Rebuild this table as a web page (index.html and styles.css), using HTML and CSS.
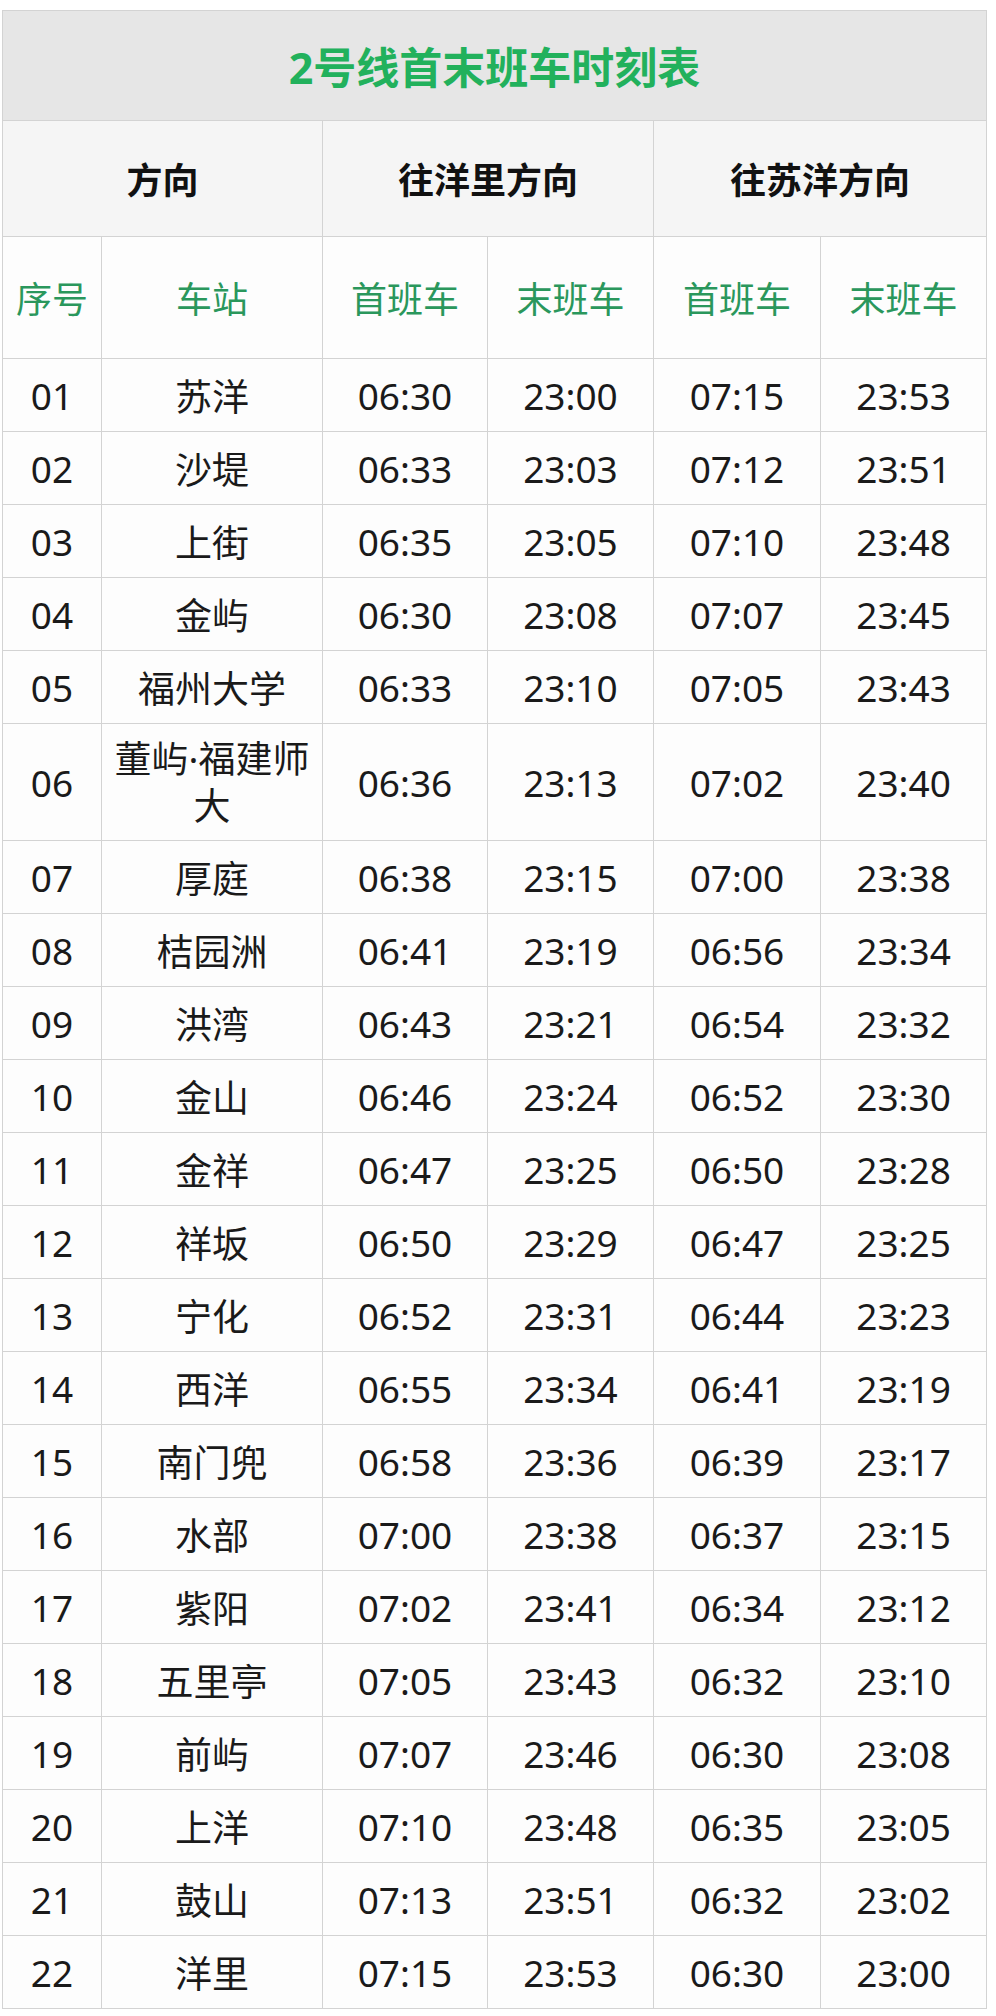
FILE: index.html
```html
<!DOCTYPE html>
<html lang="zh-CN">
<head>
<meta charset="utf-8">
<title>2号线首末班车时刻表</title>
<link rel="stylesheet" href="styles.css">
</head>
<body>
<div class="page">
<table class="timetable">
  <colgroup>
    <col class="c-no"><col class="c-st"><col class="c-t1"><col class="c-t2"><col class="c-t3"><col class="c-t4">
  </colgroup>
  <thead>
    <tr class="row-title"><th colspan="6">2号线首末班车时刻表</th></tr>
    <tr class="row-dir"><th colspan="2">方向</th><th colspan="2">往洋里方向</th><th colspan="2">往苏洋方向</th></tr>
    <tr class="row-sub"><th>序号</th><th>车站</th><th>首班车</th><th>末班车</th><th>首班车</th><th>末班车</th></tr>
  </thead>
  <tbody>
    <tr><td>01</td><td>苏洋</td><td>06:30</td><td>23:00</td><td>07:15</td><td>23:53</td></tr>
    <tr><td>02</td><td>沙堤</td><td>06:33</td><td>23:03</td><td>07:12</td><td>23:51</td></tr>
    <tr><td>03</td><td>上街</td><td>06:35</td><td>23:05</td><td>07:10</td><td>23:48</td></tr>
    <tr><td>04</td><td>金屿</td><td>06:30</td><td>23:08</td><td>07:07</td><td>23:45</td></tr>
    <tr><td>05</td><td>福州大学</td><td>06:33</td><td>23:10</td><td>07:05</td><td>23:43</td></tr>
    <tr class="tall"><td>06</td><td class="wrap">董屿·福建师<br>大</td><td>06:36</td><td>23:13</td><td>07:02</td><td>23:40</td></tr>
    <tr><td>07</td><td>厚庭</td><td>06:38</td><td>23:15</td><td>07:00</td><td>23:38</td></tr>
    <tr><td>08</td><td>桔园洲</td><td>06:41</td><td>23:19</td><td>06:56</td><td>23:34</td></tr>
    <tr><td>09</td><td>洪湾</td><td>06:43</td><td>23:21</td><td>06:54</td><td>23:32</td></tr>
    <tr><td>10</td><td>金山</td><td>06:46</td><td>23:24</td><td>06:52</td><td>23:30</td></tr>
    <tr><td>11</td><td>金祥</td><td>06:47</td><td>23:25</td><td>06:50</td><td>23:28</td></tr>
    <tr><td>12</td><td>祥坂</td><td>06:50</td><td>23:29</td><td>06:47</td><td>23:25</td></tr>
    <tr><td>13</td><td>宁化</td><td>06:52</td><td>23:31</td><td>06:44</td><td>23:23</td></tr>
    <tr><td>14</td><td>西洋</td><td>06:55</td><td>23:34</td><td>06:41</td><td>23:19</td></tr>
    <tr><td>15</td><td>南门兜</td><td>06:58</td><td>23:36</td><td>06:39</td><td>23:17</td></tr>
    <tr><td>16</td><td>水部</td><td>07:00</td><td>23:38</td><td>06:37</td><td>23:15</td></tr>
    <tr><td>17</td><td>紫阳</td><td>07:02</td><td>23:41</td><td>06:34</td><td>23:12</td></tr>
    <tr><td>18</td><td>五里亭</td><td>07:05</td><td>23:43</td><td>06:32</td><td>23:10</td></tr>
    <tr><td>19</td><td>前屿</td><td>07:07</td><td>23:46</td><td>06:30</td><td>23:08</td></tr>
    <tr><td>20</td><td>上洋</td><td>07:10</td><td>23:48</td><td>06:35</td><td>23:05</td></tr>
    <tr><td>21</td><td>鼓山</td><td>07:13</td><td>23:51</td><td>06:32</td><td>23:02</td></tr>
    <tr><td>22</td><td>洋里</td><td>07:15</td><td>23:53</td><td>06:30</td><td>23:00</td></tr>
  </tbody>
</table>
</div>
</body>
</html>
```

FILE: styles.css
```css
html, body {
  margin: 0;
  padding: 0;
  background: #ffffff;
}

.page {
  padding: 10px 0 0 2px;
}

.timetable {
  border-collapse: collapse;
  table-layout: fixed;
  width: 985px;
  font-family: "Noto Sans", "Noto Sans CJK SC", sans-serif;
  color: #1a1a1a;
}

.c-no { width: 99px; }
.c-st { width: 221px; }
.c-t1 { width: 165px; }
.c-t2 { width: 166px; }
.c-t3 { width: 167px; }
.c-t4 { width: 166px; }

.timetable th,
.timetable td {
  border: 1px solid #d3d3d3;
  padding: 0;
  text-align: center;
  vertical-align: middle;
}

.row-title th {
  height: 109px;
  background: #e6e6e6;
  color: #22b15c;
  font-size: 43px;
  font-weight: 700;
}

.row-dir th {
  height: 115px;
  background: #f5f5f5;
  color: #111111;
  font-size: 36px;
  font-weight: 700;
}

.row-sub th {
  height: 121px;
  background: #fdfdfd;
  color: #2a975c;
  font-size: 36px;
  font-weight: 400;
}

.timetable tbody td {
  height: 72px;
  background: #fdfdfd;
  font-size: 37px;
  font-weight: 400;
}

.timetable tbody tr.tall td {
  height: 116px;
}

.timetable tbody td.wrap {
  line-height: 47px;
}
```
